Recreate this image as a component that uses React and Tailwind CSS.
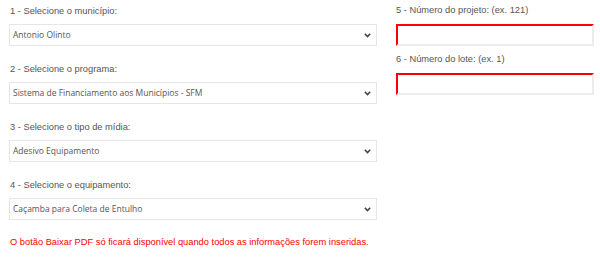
function Chevron() {
  return (
    <svg width="7" height="5" viewBox="0 0 7 5" className="shrink-0">
      <path d="M0.8 0.8 L3.5 3.6 L6.2 0.8" fill="none" stroke="#444" strokeWidth="1.6" />
    </svg>
  )
}

const arial = { fontFamily: '"Liberation Sans", Arial, sans-serif' }

function SelectField({ label, value }) {
  return (
    <div className="flex flex-col">
      <label className="h-[24px] pt-[4px] pl-[1px] text-[9.3px] leading-[14px] text-[#555]" style={arial}>
        {label}
      </label>
      <div className="flex h-[22px] items-center justify-between border border-[#e6e6e6] bg-white pl-[3px] pr-[5px]">
        <span className="text-[8.5px] text-[#555]" style={{ fontFamily: '"Open Sans", sans-serif' }}>
          {value}
        </span>
        <Chevron />
      </div>
    </div>
  )
}

function InputField({ label }) {
  return (
    <div className="flex flex-col">
      <label className="h-[24px] pt-[3px] text-[9.3px] leading-[14px] text-[#555]" style={arial}>
        {label}
      </label>
      <div className="h-[22px] border-2 border-t-[#ff0000] border-l-[#ff0000] border-r-[#ececec] border-b-[#ececec] bg-white" />
    </div>
  )
}

export default function App() {
  const selects = [
    ['1 - Selecione o município:', 'Antonio Olinto'],
    ['2 - Selecione o programa:', 'Sistema de Financiamento aos Municípios - SFM'],
    ['3 - Selecione o tipo de mídia:', 'Adesivo Equipamento'],
    ['4 - Selecione o equipamento:', 'Caçamba para Coleta de Entulho'],
  ]
  return (
    <div className="flex h-[257px] w-[600px] bg-white">
      <div className="ml-[9px] flex w-[368px] flex-col gap-[12px]">
        {selects.map(([l, v]) => (
          <SelectField key={l} label={l} value={v} />
        ))}
        <p className="mt-[4px] pl-[1px] text-[9.3px] leading-[12px] text-[#ff0000]" style={arial}>
          O botão Baixar PDF só ficará disponível quando todos as informações forem inseridas.
        </p>
      </div>
      <div className="ml-[19px] flex w-[198px] flex-col gap-[3px]">
        <InputField label="5 - Número do projeto: (ex. 121)" />
        <InputField label="6 - Número do lote: (ex. 1)" />
      </div>
    </div>
  )
}
